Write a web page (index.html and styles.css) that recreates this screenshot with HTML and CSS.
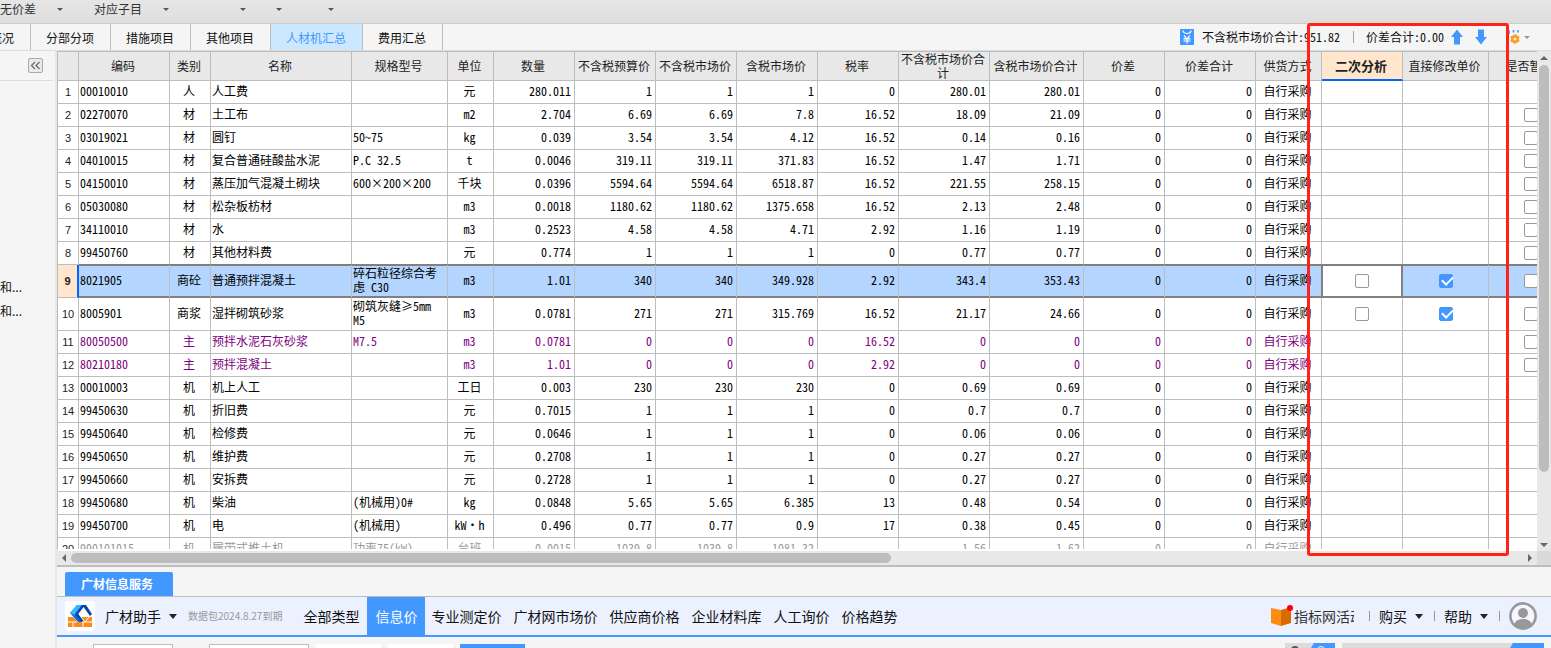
FILE: index.html
```html
<!DOCTYPE html>
<html lang="zh-CN">
<head>
<meta charset="utf-8">
<title>人材机汇总</title>
<link rel="stylesheet" href="styles.css">
</head>
<body>
<header class="toolbar">
  <button class="tool tool-diff" type="button">无价差<i class="caret"></i></button>
  <button class="tool tool-item" type="button">对应子目<i class="caret"></i></button>
  <button class="tool tool-a" type="button" aria-label="更多"><i class="caret"></i></button>
  <button class="tool tool-b" type="button" aria-label="更多"><i class="caret"></i></button>
  <button class="tool tool-c" type="button" aria-label="更多"><i class="caret"></i></button>
</header>

<div class="tabbar">
  <nav class="tabs">
    <button class="tab tab-first" type="button">概况</button>
    <button class="tab" type="button">分部分项</button>
    <button class="tab" type="button">措施项目</button>
    <button class="tab" type="button">其他项目</button>
    <button class="tab tab-active" type="button">人材机汇总</button>
    <button class="tab" type="button">费用汇总</button>
  </nav>
  <div class="totals">
    <svg class="money" viewBox="0 0 14 16" aria-hidden="true"><rect width="14" height="16" rx="1" fill="#4398ff"/><path d="M3 1.500a4 3 0 0 0 8 0M4 6.500l3 3.300 3-3.300M3.500 9.800h7M3.500 12h7M7 9.500V14.500" fill="none" stroke="#fff" stroke-width="1.200"/></svg>
    <span class="total">不含税市场价合计:951.82</span>
    <i class="bar"></i>
    <span class="total">价差合计:0.00</span>
    <button class="icon-btn arrow-up" type="button" aria-label="上移"><svg viewBox="0 0 12 16"><path d="M6 .5l6 7.500H9V15.500H3V8H0z" fill="#4398ff"/></svg></button>
    <button class="icon-btn arrow-down" type="button" aria-label="下移"><svg viewBox="0 0 12 16"><path d="M6 15.500L0 8h3V.5h6V8h3z" fill="#4398ff"/></svg></button>
    <button class="icon-btn gear" type="button" aria-label="设置"><svg viewBox="0 0 12 16"><path d="M1 1v4M5.500 1v2.500M10 1v2.500" stroke="#4398ff" stroke-width="1.600"/><circle cx="7" cy="10" r="2.700" fill="none" stroke="#ff9c28" stroke-width="2.600"/><path d="M7 5.200v9.600M2.800 7.600l1.700 1M9.500 11.400l1.700 1M2.800 12.400l1.700-1M9.500 8.600l1.700-1" stroke="#ff9c28" stroke-width="2.200"/><circle cx="7" cy="10" r="1.300" fill="#f5f5f5"/></svg><i class="caret caret-light"></i></button>
  </div>
</div>

<div class="workspace">
  <aside class="sidebar">
    <div class="side-head"><button class="collapse" type="button" aria-label="收起"><svg viewBox="0 0 13 13"><path d="M6 3L2.500 6.500 6 10M10.500 3L7 6.500l3.500 3.500" fill="none" stroke="#666" stroke-width="1.200"/></svg></button></div>
    <ul class="tree"><li>和...</li><li>和...</li></ul>
  </aside>

  <main class="content">
    <section class="grid">
      <div class="grid-body">
        <div class="grid-view">
          <table class="sheet">
            <colgroup>
              <col class="w-no"><col class="w-code"><col class="w-kind"><col class="w-name"><col class="w-spec"><col class="w-unit">
              <col class="w-num"><col class="w-num"><col class="w-num"><col class="w-num"><col class="w-num">
              <col class="w-sum"><col class="w-taxsum"><col class="w-num"><col class="w-sum"><col class="w-supply"><col class="w-num"><col class="w-edit"><col class="w-est">
            </colgroup>
            <thead>
              <tr><th></th><th>编码</th><th>类别</th><th>名称</th><th>规格型号</th><th>单位</th><th>数量</th><th>不含税预算价</th><th>不含税市场价</th><th>含税市场价</th><th>税率</th><th>不含税市场价合计</th><th>含税市场价合计</th><th>价差</th><th>价差合计</th><th>供货方式</th><th class="th-current">二次分析</th><th>直接修改单价</th><th>是否暂估</th></tr>
            </thead>
            <tbody id="rows"></tbody>
          </table>
        </div>
        <div class="vscroll"><i class="up"></i><div class="vthumb"></div><i class="down"></i></div>
      </div>
      <div class="hscroll"><div class="htrack"><i class="left"></i><div class="hrange"><div class="hthumb"></div></div><i class="right"></i></div><div class="corner"></div></div>
    </section>

    <section class="service">
      <div class="service-tabs"><button class="service-tab" type="button">广材信息服务</button></div>
      <div class="helper">
        <svg class="logo" viewBox="0 0 30 30" aria-hidden="true"><rect width="30" height="30" rx="4" fill="#fff"/><path d="M3 16h5l5 5h3l-1-5h12v10H3z" fill="#ff8a1c"/><path d="M5 12l7-8h8l-7 9 6 8h-6z" fill="#0b6be8"/><path d="M5 12l7-8h5l-7 10z" fill="#35b8ff"/><path d="M14 4h7l6 9-2 2-6.500-9-5.500 7 6 7-3 1-6-8 7-9z" fill="#0a46a8"/><path d="M3 21h9M17 21h10M8 21v5M18 21v5M16 16l4 5 4-5" fill="none" stroke="#fff" stroke-width="1"/></svg>
        <button class="menu menu-helper" type="button">广材助手<i class="drop"></i></button>
        <span class="expiry">数据包2024.8.27到期</span>
        <nav class="links">
          <button class="link" type="button">全部类型</button>
          <button class="link link-active" type="button">信息价</button>
          <button class="link" type="button">专业测定价</button>
          <button class="link" type="button">广材网市场价</button>
          <button class="link" type="button">供应商价格</button>
          <button class="link" type="button">企业材料库</button>
          <button class="link" type="button">人工询价</button>
          <button class="link" type="button">价格趋势</button>
        </nav>
        <div class="account">
          <svg class="book" viewBox="0 0 22 22" aria-hidden="true"><path d="M0 3l10 2v16L0 18z" fill="#ff8a14"/><path d="M10 5l10-3v16l-10 3z" fill="#d96a00"/><circle cx="19" cy="3" r="3" fill="#f00"/></svg>
          <span class="promo">指标网活动</span>
          <i class="sep"></i>
          <button class="menu" type="button">购买<i class="drop"></i></button>
          <i class="sep"></i>
          <button class="menu" type="button">帮助<i class="drop"></i></button>
          <i class="sep"></i>
          <svg class="avatar" viewBox="0 0 28 28" role="img" aria-label="用户"><circle cx="14" cy="14" r="12.600" fill="#f5f7ff" stroke="#999" stroke-width="2.600"/><circle cx="14" cy="11" r="5" fill="#999"/><path d="M5 23c1-4 4-6 9-6s8 2 9 6c-5 4-13 4-18 0z" fill="#999"/></svg>
        </div>
      </div>
      <div class="filters">
        <select class="field field-region" aria-label="地区"></select>
        <select class="field field-period" aria-label="期数"></select>
        <span class="chip"></span><span class="chip"></span>
        <button class="query" type="button" aria-label="查询"></button>
        <div class="filter-right">
          <svg class="view-switch" viewBox="0 0 50 5" aria-hidden="true"><path d="M0 0h50v5H0z" fill="#dcdcdc"/><path d="M29 0h21v5H26z" fill="#4398ff"/><circle cx="10" cy="7" r="4" fill="#555"/><circle cx="36" cy="7" r="3.500" fill="none" stroke="#fff"/></svg>
          <svg class="search-box" viewBox="0 0 202 5" aria-hidden="true"><path d="M0 0h202v5H0z" fill="#dcdcdc"/><path d="M171 0h31v5h-34z" fill="#4398ff"/></svg>
        </div>
      </div>
    </section>
  </main>
</div>
<div class="highlight"></div>
<script src="rows.js"></script>
</body>
</html>
```

FILE: styles.css
```css
* { box-sizing: border-box; }
body {
  margin: 0;
  height: 100vh;
  display: flex;
  flex-direction: column;
  overflow: hidden;
  position: relative;
  background: #f5f5f5;
  color: #111;
  font: 12px/14px "Noto Sans CJK SC", sans-serif;
}
button { margin: 0; padding: 0; border: 0; background: none; color: inherit; font: inherit; white-space: nowrap; }
svg { display: block; }

.toolbar {
  flex: none;
  height: 24px;
  display: flex;
  align-items: flex-start;
  padding-top: 2px;
  background: linear-gradient(#e6e6e6, #dedede);
  border-bottom: 1px solid #cdcdcd;
  color: #333;
}
.tool { display: flex; align-items: center; height: 14px; }
.tool-diff { gap: 21px; width: 94px; }
.tool-item { gap: 21px; width: 146px; }
.tool-a { width: 36px; }
.tool-b { width: 52px; }
.caret { border: 3px solid transparent; border-top-color: #555; border-bottom: 0; }
.caret-light { border-top-color: #999; }

.tabbar {
  flex: none;
  height: 27px;
  display: flex;
  justify-content: space-between;
  border-bottom: 1px solid #ddd;
}
.tabs { display: flex; }
.tab { padding: 2px 16px 0 15px; border-right: 1px solid #bdbdbd; }
.tab-first { display: flex; justify-content: flex-end; align-items: center; width: 31px; padding-left: 0; overflow: hidden; }
.tab-active { background: #cce8ff; color: #4398ff; }
.totals { display: flex; align-items: center; padding-right: 21px; }
.money { width: 14px; height: 16px; margin-right: 8px; }
.total { font-family: "Noto Sans Mono CJK SC", "Noto Sans CJK SC", monospace; white-space: nowrap; }
.bar { width: 1px; height: 12px; margin: 0 12px 0 13px; background: #8fa5c0; }
.icon-btn svg { width: 12px; height: 16px; }
.arrow-up { margin-left: 7px; }
.arrow-down { margin-left: 12px; }
.gear { display: flex; align-items: center; gap: 4px; margin-left: 21px; }

.workspace { flex: 1; min-height: 0; display: flex; }
.sidebar { flex: none; width: 57px; border-right: 2px solid #e6e6e6; }
.side-head { height: 30px; margin-right: 2px; display: flex; justify-content: flex-end; padding: 7px 10px 0 0; border-bottom: 1px solid #ddd; }
.collapse { width: 15px; height: 15px; border: 1px solid #aaa; border-radius: 2px; background: #eaeaea; }
.tree { margin: 194px 0 0; padding: 0; list-style: none; }
.tree li { height: 24px; line-height: 24px; }

.content { flex: 1; min-width: 0; display: flex; flex-direction: column; }
.grid { flex: 1; min-height: 0; display: flex; flex-direction: column; border-bottom: 2px solid #bdbdbd; }
.grid-body { flex: 1; min-height: 0; display: flex; }
.grid-view { flex: 1; min-width: 0; overflow: hidden; background: #fff; border-left: 1px solid #bdbdbd; border-top: 1px solid #bdbdbd; border-bottom: 2px solid #fff; }
.sheet {
  table-layout: fixed;
  width: 1515px;
  border-collapse: separate;
  border-spacing: 0;
  font-family: "Noto Sans Mono CJK SC", "Noto Sans CJK SC", monospace;
  color: #000;
}
.w-no { width: 21px; }
.w-code, .w-sum { width: 91px; }
.w-kind { width: 41px; }
.w-name { width: 141px; }
.w-spec { width: 96px; }
.w-unit { width: 46px; }
.w-num { width: 81px; }
.w-taxsum { width: 94px; }
.w-supply { width: 66px; }
.w-edit { width: 86px; }
.w-est { width: 84px; }
.sheet th { height: 29px; padding: 0 2px 0 0; border-right: 1px solid #bdbdbd; border-bottom: 1px solid #bdbdbd; background: #e8e8e8; color: #222; font-weight: 400; }
.sheet .th-current { background: #ffe6cc; border-bottom: 2px solid #0066ff; font-size: 13px; font-weight: 700; }
.sheet td { height: 23px; padding: 1px 3px 3px 1px; border-right: 1px solid #bdbdbd; border-bottom: 1px solid #bdbdbd; text-align: center; overflow: hidden; }
.sheet .no { padding: 0; font: 11px/14px "Liberation Sans", sans-serif; color: #222; }
.sheet .text { text-align: left; }
.sheet .num { text-align: right; }
.sheet .tick { padding: 2px; }
.main-material td:not(.no) { color: #800080; }
.muted td:not(.no) { color: #999; }
.selected td { background: #b3d5ff; border-bottom-color: #808080; box-shadow: 0 -1px #808080, inset 0 1px #808080, inset 0 -1px #808080; }
.sheet .selected .no { background: #ffe6cc; border-bottom-color: #bdbdbd; border-right: 2px solid #0066ff; box-shadow: none; font-weight: 700; }
.selected td.current { background: #fff; border-right-color: #808080; box-shadow: 0 -1px #808080, -1px 0 #808080, inset 0 0 0 1px #808080; }

.check { appearance: none; display: block; width: 14px; height: 14px; margin: 0 auto; border: 1px solid #999; border-radius: 2px; background: #fff; }
.check:checked { border-color: #4398ff; background: #4398ff; }
.check:checked::after { content: ""; display: block; width: 9px; height: 5px; margin: 2px 0 0 2px; border: solid #fff; border-width: 0 0 2px 2px; transform: translateY(-1px) rotate(-45deg); }

.vscroll { flex: none; width: 14px; display: flex; flex-direction: column; align-items: center; padding: 5px 0 4px; background: #e8e8e8; }
.vthumb { width: 10px; height: 407px; margin: 5px 0 auto; border-radius: 5px; background: #bdbdbd; }
.up, .down { border: 4px solid transparent; }
.up { border-bottom-color: #666; border-top: 0; }
.down { border-top-color: #666; border-bottom: 0; }
.hscroll { flex: none; height: 14px; display: flex; }
.htrack { flex: 1; display: flex; align-items: center; padding: 0 5px; background: #e8e8e8; }
.hrange { flex: 1; padding: 0 5px; }
.hthumb { width: 56.5%; height: 10px; border-radius: 5px; background: #bdbdbd; }
.left, .right { border: 4px solid transparent; }
.left { border-right-color: #666; border-left: 0; }
.right { border-left-color: #666; border-right: 0; }
.corner { width: 14px; background: #dadada; }

.service { flex: none; }
.service-tabs { height: 30px; padding: 5px 0 0 8px; border-bottom: 1px solid #bdbdbd; }
.service-tab { width: 108px; height: 24px; padding: 0 4px 0 0; border-radius: 2px 2px 0 0; background: #4398ff; color: #fff; font-weight: 700; }
.helper { height: 40px; display: flex; align-items: center; padding: 0 14px 0 8px; background: #ebf1ff; border-bottom: 2px solid #4398ff; font-size: 14px; line-height: 20px; }
.logo { width: 30px; height: 30px; margin-right: 10px; }
.menu { display: flex; align-items: center; gap: 8px; }
.drop { border: 4px solid transparent; border-top: 5px solid #222; border-bottom: 0; }
.expiry { margin: 0 15px 0 11px; color: #999; font-size: 10px; white-space: nowrap; }
.links { align-self: stretch; display: flex; }
.link { padding: 0 6px; }
.link-active { margin-left: 2px; padding: 0 8px; background: #4398ff; color: #fff; }
.account { margin-left: auto; display: flex; align-items: center; }
.book { width: 22px; height: 22px; margin: 0 1px 0 0; }
.promo { width: 60px; overflow: hidden; white-space: nowrap; color: #333; }
.sep { width: 1px; height: 10px; margin: 0 9px 0 11px; background: #999; }
.promo + .sep { margin-left: 15px; }
.avatar { width: 28px; height: 28px; }
.filters { height: 11px; display: flex; align-items: flex-start; padding: 7px 7px 0 36px; overflow: hidden; }
.field { flex: none; appearance: none; height: 24px; border: 1px solid #bdbdbd; background: #fff; }
.field-region { width: 80px; margin-right: 36px; }
.field-period { width: 100px; margin-right: 7px; }
.chip { flex: none; width: 65px; height: 24px; margin-right: 7px; background: #fff; }
.query { flex: none; width: 65px; height: 24px; background: #4398ff; }
.filter-right { margin: -1px 0 0 auto; display: flex; gap: 7px; }
.view-switch { width: 50px; height: 5px; }
.search-box { width: 202px; height: 5px; }

.highlight { position: absolute; top: 23px; right: 42px; bottom: 92px; width: 202px; border: 3px solid #ff2216; border-radius: 3px; pointer-events: none; }
```

FILE: rows.js
```js
const rows = [
  ["00010010", "人", "人工费", "", "元", "280.011", "1", "1", "1", "0", "280.01", "280.01"],
  ["02270070", "材", "土工布", "", "m2", "2.704", "6.69", "6.69", "7.8", "16.52", "18.09", "21.09"],
  ["03019021", "材", "圆钉", "50~75", "kg", "0.039", "3.54", "3.54", "4.12", "16.52", "0.14", "0.16"],
  ["04010015", "材", "复合普通硅酸盐水泥", "P.C 32.5", "t", "0.0046", "319.11", "319.11", "371.83", "16.52", "1.47", "1.71"],
  ["04150010", "材", "蒸压加气混凝土砌块", "600×200×200", "千块", "0.0396", "5594.64", "5594.64", "6518.87", "16.52", "221.55", "258.15"],
  ["05030080", "材", "松杂板枋材", "", "m3", "0.0018", "1180.62", "1180.62", "1375.658", "16.52", "2.13", "2.48"],
  ["34110010", "材", "水", "", "m3", "0.2523", "4.58", "4.58", "4.71", "2.92", "1.16", "1.19"],
  ["99450760", "材", "其他材料费", "", "元", "0.774", "1", "1", "1", "0", "0.77", "0.77"],
  ["8021905", "商砼", "普通预拌混凝土", "碎石粒径综合考虑 C30", "m3", "1.01", "340", "340", "349.928", "2.92", "343.4", "353.43"],
  ["8005901", "商浆", "湿拌砌筑砂浆", "砌筑灰缝≥5mm M5", "m3", "0.0781", "271", "271", "315.769", "16.52", "21.17", "24.66"],
  ["80050500", "主", "预拌水泥石灰砂浆", "M7.5", "m3", "0.0781", "0", "0", "0", "16.52", "0", "0"],
  ["80210180", "主", "预拌混凝土", "", "m3", "1.01", "0", "0", "0", "2.92", "0", "0"],
  ["00010003", "机", "机上人工", "", "工日", "0.003", "230", "230", "230", "0", "0.69", "0.69"],
  ["99450630", "机", "折旧费", "", "元", "0.7015", "1", "1", "1", "0", "0.7", "0.7"],
  ["99450640", "机", "检修费", "", "元", "0.0646", "1", "1", "1", "0", "0.06", "0.06"],
  ["99450650", "机", "维护费", "", "元", "0.2708", "1", "1", "1", "0", "0.27", "0.27"],
  ["99450660", "机", "安拆费", "", "元", "0.2728", "1", "1", "1", "0", "0.27", "0.27"],
  ["99450680", "机", "柴油", "(机械用)0#", "kg", "0.0848", "5.65", "5.65", "6.385", "13", "0.48", "0.54"],
  ["99450700", "机", "电", "(机械用)", "kW·h", "0.496", "0.77", "0.77", "0.9", "17", "0.38", "0.45"],
  ["990101015", "机", "履带式推土机", "功率75(kW)", "台班", "0.0015", "1039.8", "1039.8", "1081.32", "", "1.56", "1.62"]
];

const classes = ["text", "", "text", "text", "", "num", "num", "num", "num", "num", "num", "num"];
const check = (label, on) => `<input class="check" type="checkbox" aria-label="${label}"${on ? " checked" : ""}>`;

document.getElementById("rows").innerHTML = rows.map((row, i) => {
  const no = i + 1;
  const mixed = no === 9 || no === 10;
  const state = no === 9 ? "selected" : row[1] === "主" ? "main-material" : no === 20 ? "muted" : "";
  const cells = row.map((value, c) => `<td class="${classes[c]}">${value}</td>`).join("");
  return `<tr class="${state}"><td class="no">${no}</td>${cells}<td class="num">0</td><td class="num">0</td><td>自行采购</td>` +
    `<td class="tick current">${mixed ? check("二次分析", false) : ""}</td>` +
    `<td class="tick">${mixed ? check("直接修改单价", true) : ""}</td>` +
    `<td class="tick">${no > 1 && no < 13 ? check("是否暂估", false) : ""}</td></tr>`;
}).join("");
```
